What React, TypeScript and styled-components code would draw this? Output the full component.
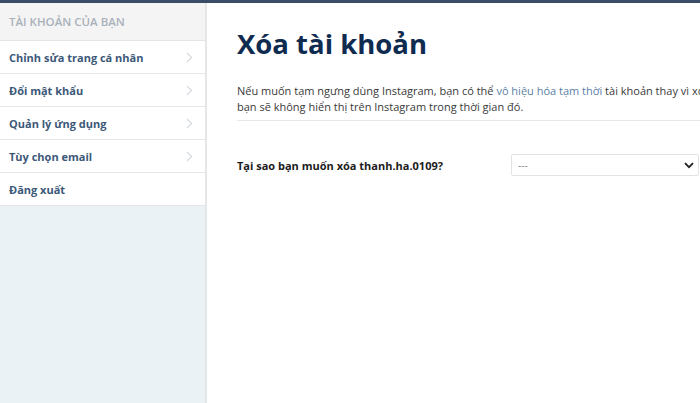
import React from "react";
import styled, { createGlobalStyle } from "styled-components";

const Global = createGlobalStyle`
html, body {
    margin: 0;
    padding: 0;
    background: #ffffff;
    font-family: "Open Sans", "Liberation Sans", sans-serif;
}
`;

const menu = [
    { label: "Chỉnh sửa trang cá nhân", arrow: true },
    { label: "Đổi mật khẩu", arrow: true },
    { label: "Quản lý ứng dụng", arrow: true },
    { label: "Tùy chọn email", arrow: true },
    { label: "Đăng xuất", arrow: false },
];

const Chevron = () => (
    <svg width="7" height="11" viewBox="0 0 7 11">
        <path d="M1 1l4.5 4.5L1 10" fill="none" stroke="#d5d9dd" strokeWidth="1.1" />
    </svg>
);

const App = () => {
    return (
        <>
            <Global />
            <Page>
                <TopBar />
                <Body>
                    <Side>
                        <SideHead>TÀI KHOẢN CỦA BẠN</SideHead>
                        {menu.map((m) => (
                            <Item key={m.label}>
                                {m.label}
                                {m.arrow && <Chevron />}
                            </Item>
                        ))}
                    </Side>

                    <Main>
                        <Title>Xóa tài khoản</Title>
                        <Text>
                            Nếu muốn tạm ngưng dùng Instagram, bạn có thể <Link>vô hiệu hóa tạm thời</Link> tài khoản thay vì xóa.
                            Trang cá nhân,<br />
                            bạn sẽ không hiển thị trên Instagram trong thời gian đó.
                        </Text>
                        <Line />
                        <Row>
                            <Label>Tại sao bạn muốn xóa thanh.ha.0109?</Label>
                            <Select>
                                <span>---</span>
                                <svg width="10" height="7" viewBox="0 0 10 7">
                                    <path d="M1 1.2l4 4 4-4" fill="none" stroke="#222" strokeWidth="1.8" />
                                </svg>
                            </Select>
                        </Row>
                    </Main>
                </Body>
            </Page>
        </>
    );
};

export default App;

const Page = styled.div`
width: 700px;
height: 403px;
overflow: hidden;
display: flex;
flex-direction: column;
`;

const TopBar = styled.div`
height: 3px;
background: #3b4d66;
flex-shrink: 0;
`;

const Body = styled.div`
flex: 1;
display: flex;
`;

const Side = styled.div`
width: 205px;
flex-shrink: 0;
background: #eaf2f6;
border-right: 2px solid #e4e6e8;
`;

const SideHead = styled.div`
height: 38px;
box-sizing: border-box;
padding: 0 9px;
display: flex;
align-items: center;
background: #f4f4f4;
border-bottom: 1px solid #e2e4e6;
color: #a9b1ba;
font-size: 11.5px;
font-weight: 600;
`;

const Item = styled.div`
height: 33px;
box-sizing: border-box;
padding: 0 12px 0 9px;
display: flex;
align-items: center;
justify-content: space-between;
background: #ffffff;
border-bottom: 1px solid #e4e6e8;
color: #3c5878;
font-size: 11px;
font-weight: 700;
`;

const Main = styled.div`
flex: 1;
min-width: 0;
padding: 22px 0 0 30px;
overflow: hidden;
`;

const Title = styled.h1`
margin: 0;
font-size: 27.5px;
font-weight: 700;
color: #0f2b50;
white-space: nowrap;
line-height: 38px;
`;

const Text = styled.p`
margin: 20px 0 0;
font-size: 11px;
line-height: 16px;
color: #3a3a3a;
white-space: nowrap;
`;

const Link = styled.span`
color: #5a7fa6;
`;

const Line = styled.div`
height: 1px;
background: #e6e8ea;
margin-top: 5px;
`;

const Row = styled.div`
display: flex;
align-items: center;
margin-top: 33px;
`;

const Label = styled.div`
width: 274px;
flex-shrink: 0;
font-size: 11px;
font-weight: 700;
color: #1c1c1c;
white-space: nowrap;
`;

const Select = styled.div`
width: 188px;
height: 22px;
box-sizing: border-box;
border: 1px solid #e1e3e5;
border-radius: 2px;
display: flex;
align-items: center;
justify-content: space-between;
padding: 0 4px 0 6px;
font-size: 10px;
color: #888;
`;
